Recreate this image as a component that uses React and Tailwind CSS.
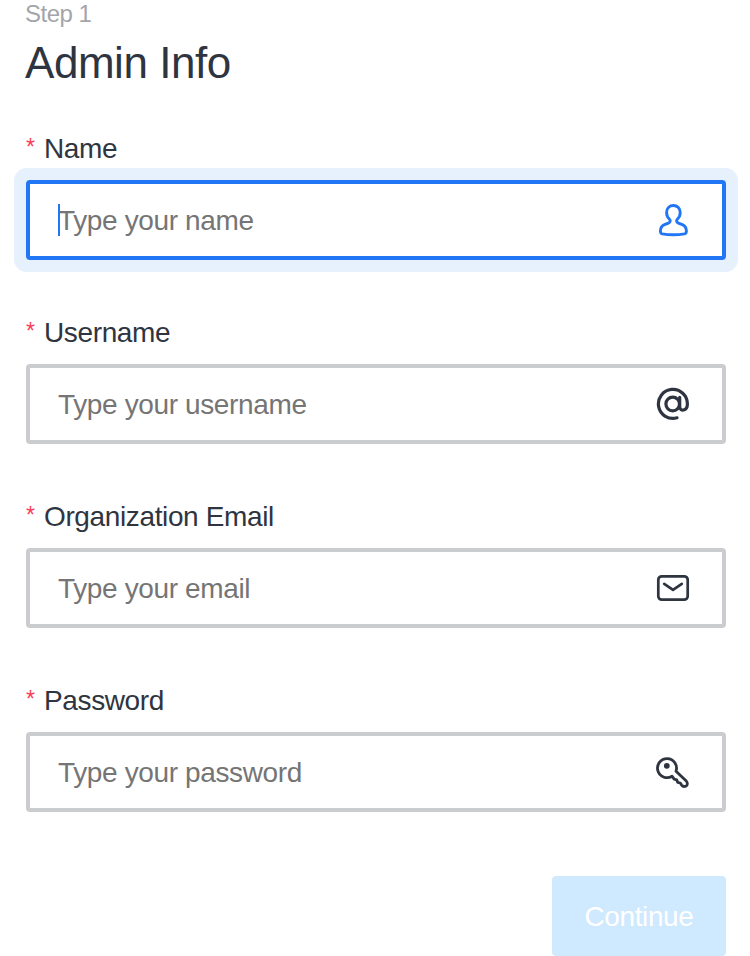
const PersonIcon = () => (
  <svg width="34" height="34" viewBox="0 0 34 34" fill="none" stroke="currentColor" strokeWidth="2.9" strokeLinejoin="round" strokeLinecap="round">
    <path d="M17.400 2.500c-4.100 0-6.800 3-6.800 7 0 2.700 1 4.900 2.700 6.500 1.400 1.400 1.200 3.300-.9 4.100l-3.900 1.600c-2.900 1.200-4.100 3.200-4.100 6.400 0 1.800.3 2.500 1.800 2.800 7 1.100 15.400 1.100 22.400 0 1.500-.3 1.800-1 1.800-2.800 0-3.200-1.200-5.200-4.100-6.400l-3.900-1.600c-2.100-.8-2.300-2.700-.9-4.100 1.700-1.600 2.700-3.800 2.700-6.500 0-4-2.700-7-6.800-7z" />
  </svg>
);

const AtIcon = () => (
  <svg width="34" height="34" viewBox="0 0 34 34" fill="none" stroke="currentColor" strokeWidth="3.200" strokeLinecap="round" strokeLinejoin="round">
    <circle cx="16.700" cy="17" r="6.800" />
    <path d="M23.700 10.400v9.400c0 5 7.700 4.600 7.700-2.800A14.500 14.500 0 1 0 21 30.800" />
  </svg>
);

const MailIcon = () => (
  <svg width="34" height="34" viewBox="0 0 34 34" fill="none" stroke="currentColor" strokeWidth="2.700" strokeLinecap="round" strokeLinejoin="round">
    <rect x="2.300" y="5.300" width="29.400" height="23.400" rx="3.500" />
    <path d="M8.200 12.800l8.800 6 8.800-6" />
  </svg>
);

const KeyIcon = () => (
  <svg width="34" height="34" viewBox="0 0 34 34" fill="none" stroke="currentColor" strokeWidth="2.800" strokeLinecap="round" strokeLinejoin="round">
    <path d="M20 16.200l10.300 9.900c1.400 1.500 1.500 3.900-.2 4.900-1.800.9-3.500.5-4.500-.9l-1.300-2.100-2.700-.7-.9-2.500-2.500-.7-2.200-2.900A9.500 9.500 0 1 1 20 16.200z" />
    <circle cx="10.800" cy="10.800" r="2.900" fill="currentColor" stroke="none" />
  </svg>
);

const fields = [
  { label: "Name", placeholder: "Type your name", Icon: PersonIcon, focused: true },
  { label: "Username", placeholder: "Type your username", Icon: AtIcon },
  { label: "Organization Email", placeholder: "Type your email", Icon: MailIcon },
  { label: "Password", placeholder: "Type your password", Icon: KeyIcon },
];

function Field({ label, placeholder, Icon, focused }) {
  return (
    <div className="flex h-[184px] flex-col">
      <div className="flex h-12 items-start pt-px text-[28px] leading-8 tracking-[-0.37px] text-[#2f3540]">
        <span className="w-[18px] text-[23px] leading-[29px] text-[#fa3e58]">*</span>
        <span>{label}</span>
      </div>
      <div className={focused
        ? "flex h-20 items-center justify-between rounded-[4px] border-4 border-[#2176f5] pr-8 pl-7 text-[#2176f5] ring-[12px] ring-[#e7f1fe]"
        : "flex h-20 items-center justify-between rounded-[4px] border-4 border-[#cacccf] pr-8 pl-7 text-[#2f3540]"}>
        <span className="relative pt-0.5 text-[28px] leading-8 tracking-[-0.37px] text-[#757575]">
          {placeholder}
          {focused && <span className="absolute top-px left-0 h-8 w-0.5 bg-[#2176f5]" />}
        </span>
        <Icon />
      </div>
    </div>
  );
}

export default function App() {
  return (
    <main className="h-[956px] w-[750px] overflow-hidden bg-white pr-6 pl-[26px] font-['Liberation_Sans',Arial,sans-serif]">
      <p className="-ml-px h-7 text-2xl leading-7 tracking-[-0.5px] text-[#a3a5aa]">Step 1</p>
      <h1 className="-ml-px h-[104px] pt-[9px] text-[44px] leading-[52px] tracking-[-0.45px] text-[#2f3540]">Admin Info</h1>
      <form>
        {fields.map((field) => <Field key={field.label} {...field} />)}
        <div className="flex justify-end pt-2">
          <button type="button" className="h-20 w-[174px] rounded-[4px] bg-[#cfe9fe] pt-0.5 text-[28px] tracking-[-0.4px] text-white">Continue</button>
        </div>
      </form>
    </main>
  );
}
